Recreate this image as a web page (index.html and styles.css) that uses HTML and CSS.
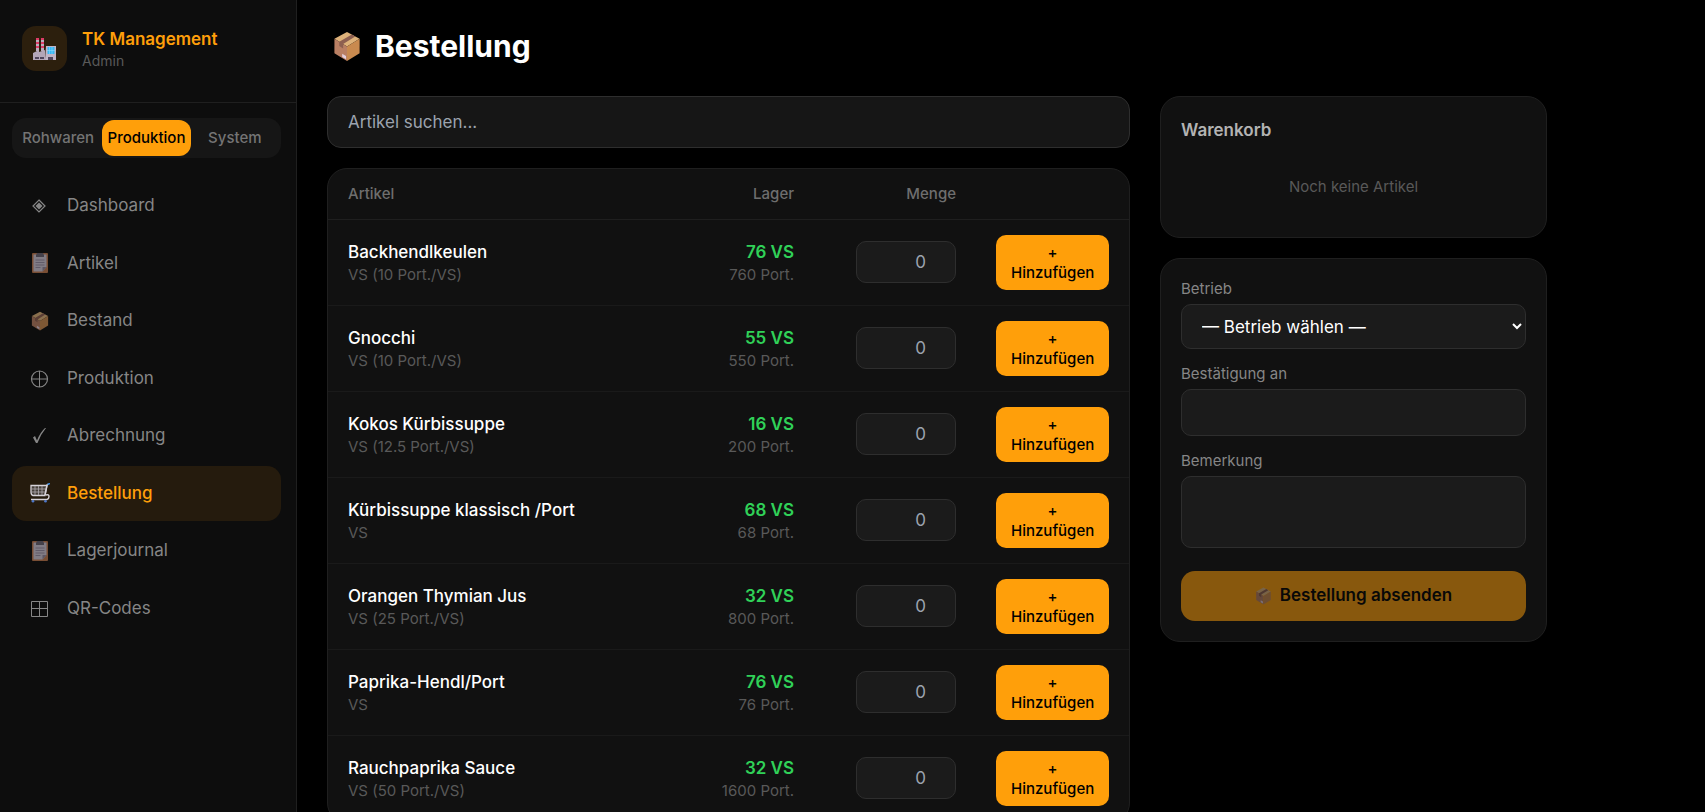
FILE: index.html
```html
<!DOCTYPE html>
<html lang="de">
  <head>
    <meta charset="UTF-8" />
    <meta name="viewport" content="width=device-width, initial-scale=1.0" />
    <title>TK Management – Bestellung</title>
    <link rel="stylesheet" href="styles.css" />
  </head>
  <body>
    <!-- Icons -->
    <svg class="sprite" aria-hidden="true">
      <symbol id="icon-box" viewBox="0 0 28 32">
        <path d="M14 1 27 8 14 16 1 8z" fill="#deb27a" />
        <path d="M1 8l13 8v15L1 23z" fill="#b97f63" />
        <path d="M27 8l-13 8v15l13-8z" fill="#c98a4f" />
        <path d="M19 3.700 22.500 5.600 10 13.500V18l-4-2.500v-4.400z" fill="#8d5f50" />
        <path d="M9 23.500l4 2.300v3.400l-4-2.300z" fill="#e3cfdc" />
      </symbol>
      <symbol id="icon-clipboard" viewBox="0 0 16 20">
        <rect width="16" height="20" rx="1" fill="#c27a4e" />
        <path d="M1.500 1.500h13v12.500l-4 4.500h-9z" fill="#cfc6d6" />
        <path d="M14.500 14l-4 4.500V14z" fill="#94899f" />
        <path d="M5 0h6l1 2v2H4V2z" fill="#6b6474" />
        <path d="M3.500 7h9M3.500 9.500h9M3.500 12h9M3.500 14.500h5" stroke="#8d8299" stroke-width=".8" />
      </symbol>
      <symbol id="icon-factory" viewBox="0 0 23 23">
        <path d="M3 1h3v13H3zM8 1h3v13H8z" fill="#b9aebd" />
        <path d="M3 1h3v2H3zM3 5h3v2H3zM3 9h3v2H3zM8 1h3v2H8zM8 5h3v2H8zM8 9h3v2H8z" fill="#dc3c68" />
        <path d="M0 16l6-3v2l6-2v10H0z" fill="#b3a6b8" />
        <path d="M13 9h10v14H12z" fill="#c0b4c6" />
        <path d="M14.500 10h7v7h-7z" fill="#38b8f5" />
        <path d="M16.500 10v7M19 10v7M14 13.500h8" stroke="#8fdcff" stroke-width=".6" />
        <path d="M2 20h4v2H2zM7 20h4v2H7zM15 20h5v3h-5z" fill="#50455c" />
      </symbol>
      <symbol id="icon-cart" viewBox="0 0 20 20">
        <path d="M1 2.500h16L15 12.500H3Q1 12 1 9z" fill="#46403a" stroke="#d6d2d8" stroke-width="1.300" />
        <path d="M5 3v9M8.500 3v9M12 3v9M1.500 6h14M1.500 9h14" stroke="#b0abb0" stroke-width=".8" />
        <path d="M18.500 1l-1.500 1-2 10M16 12q3-1 3 1.500T17 16.500H1" fill="none" stroke="#d6d2d8" stroke-width="1.400" />
        <path d="M17.500 1.500 20 .5" stroke="#3f8de0" stroke-width="1.600" />
        <circle cx="3" cy="18.300" r="1.300" fill="#4f78c8" />
        <circle cx="15.500" cy="18.300" r="1.300" fill="#4f78c8" />
      </symbol>
      <symbol id="icon-diamond" viewBox="0 0 20 20">
        <path d="M9 4l6 6-6 6-6-6z" fill="none" stroke="currentColor" stroke-width="1.200" />
        <path d="M9 6.500 12.500 10 9 13.500 5.500 10z" fill="currentColor" />
      </symbol>
      <symbol id="icon-plus-circle" viewBox="0 0 20 20">
        <path d="M9.500 3v16M1.500 11h16" stroke="currentColor" />
        <circle cx="9.500" cy="11" r="8" fill="none" stroke="currentColor" stroke-width="1.200" />
      </symbol>
      <symbol id="icon-check" viewBox="0 0 20 20">
        <path d="M3 11.500l2-1.500 2 4.500Q10 6.500 15 2h1Q10.500 8.500 7.500 17H6z" fill="currentColor" />
      </symbol>
      <symbol id="icon-grid" viewBox="0 0 20 20">
        <path d="M1.500 3.500h16v15h-16zM9.500 3.500v15M1.500 10.500h16" fill="none" stroke="currentColor" />
      </symbol>
    </svg>

    <div class="layout">
      <aside class="sidebar">
        <div class="brand">
          <div class="brand-logo"><svg><use href="#icon-factory" /></svg></div>
          <div>
            <div class="brand-name">TK Management</div>
            <div class="brand-role">Admin</div>
          </div>
        </div>

        <div class="tabs">
          <button class="tab">Rohwaren</button>
          <button class="tab active">Produktion</button>
          <button class="tab">System</button>
        </div>

        <nav class="nav">
          <a href="#" class="nav-item"><svg><use href="#icon-diamond" /></svg>Dashboard</a>
          <a href="#" class="nav-item"><svg class="emoji"><use href="#icon-clipboard" /></svg>Artikel</a>
          <a href="#" class="nav-item"><svg class="emoji"><use href="#icon-box" /></svg>Bestand</a>
          <a href="#" class="nav-item"><svg><use href="#icon-plus-circle" /></svg>Produktion</a>
          <a href="#" class="nav-item"><svg><use href="#icon-check" /></svg>Abrechnung</a>
          <a href="#" class="nav-item active"><svg><use href="#icon-cart" /></svg>Bestellung</a>
          <a href="#" class="nav-item"><svg class="emoji"><use href="#icon-clipboard" /></svg>Lagerjournal</a>
          <a href="#" class="nav-item"><svg><use href="#icon-grid" /></svg>QR-Codes</a>
        </nav>
      </aside>

      <main class="main">
        <h1><svg><use href="#icon-box" /></svg>Bestellung</h1>

        <div class="columns">
          <section class="products">
            <input type="search" class="search" placeholder="Artikel suchen..." aria-label="Artikel suchen" />

            <div class="table-card">
              <table>
                <colgroup>
                  <col />
                  <col class="col-stock" />
                  <col class="col-amount" />
                  <col class="col-action" />
                </colgroup>
                <thead>
                  <tr>
                    <th>Artikel</th>
                    <th class="right">Lager</th>
                    <th class="right">Menge</th>
                    <th></th>
                  </tr>
                </thead>
                <tbody>
                  <tr>
                    <td><div class="name">Backhendlkeulen</div><div class="sub">VS (10 Port./VS)</div></td>
                    <td class="right"><div class="stock">76 VS</div><div class="sub">760 Port.</div></td>
                    <td class="right"><input type="number" class="amount" min="0" placeholder="0" aria-label="Menge Backhendlkeulen" /></td>
                    <td><button class="add-btn">+ Hinzufügen</button></td>
                  </tr>
                  <tr>
                    <td><div class="name">Gnocchi</div><div class="sub">VS (10 Port./VS)</div></td>
                    <td class="right"><div class="stock">55 VS</div><div class="sub">550 Port.</div></td>
                    <td class="right"><input type="number" class="amount" min="0" placeholder="0" aria-label="Menge Gnocchi" /></td>
                    <td><button class="add-btn">+ Hinzufügen</button></td>
                  </tr>
                  <tr>
                    <td><div class="name">Kokos Kürbissuppe</div><div class="sub">VS (12.5 Port./VS)</div></td>
                    <td class="right"><div class="stock">16 VS</div><div class="sub">200 Port.</div></td>
                    <td class="right"><input type="number" class="amount" min="0" placeholder="0" aria-label="Menge Kokos Kürbissuppe" /></td>
                    <td><button class="add-btn">+ Hinzufügen</button></td>
                  </tr>
                  <tr>
                    <td><div class="name">Kürbissuppe klassisch /Port</div><div class="sub">VS</div></td>
                    <td class="right"><div class="stock">68 VS</div><div class="sub">68 Port.</div></td>
                    <td class="right"><input type="number" class="amount" min="0" placeholder="0" aria-label="Menge Kürbissuppe klassisch" /></td>
                    <td><button class="add-btn">+ Hinzufügen</button></td>
                  </tr>
                  <tr>
                    <td><div class="name">Orangen Thymian Jus</div><div class="sub">VS (25 Port./VS)</div></td>
                    <td class="right"><div class="stock">32 VS</div><div class="sub">800 Port.</div></td>
                    <td class="right"><input type="number" class="amount" min="0" placeholder="0" aria-label="Menge Orangen Thymian Jus" /></td>
                    <td><button class="add-btn">+ Hinzufügen</button></td>
                  </tr>
                  <tr>
                    <td><div class="name">Paprika-Hendl/Port</div><div class="sub">VS</div></td>
                    <td class="right"><div class="stock">76 VS</div><div class="sub">76 Port.</div></td>
                    <td class="right"><input type="number" class="amount" min="0" placeholder="0" aria-label="Menge Paprika-Hendl" /></td>
                    <td><button class="add-btn">+ Hinzufügen</button></td>
                  </tr>
                  <tr>
                    <td><div class="name">Rauchpaprika Sauce</div><div class="sub">VS (50 Port./VS)</div></td>
                    <td class="right"><div class="stock">32 VS</div><div class="sub">1600 Port.</div></td>
                    <td class="right"><input type="number" class="amount" min="0" placeholder="0" aria-label="Menge Rauchpaprika Sauce" /></td>
                    <td><button class="add-btn">+ Hinzufügen</button></td>
                  </tr>
                </tbody>
              </table>
            </div>
          </section>

          <aside class="order">
            <section class="card">
              <h2>Warenkorb</h2>
              <p class="empty">Noch keine Artikel</p>
            </section>

            <form class="card">
              <div class="field">
                <label for="betrieb">Betrieb</label>
                <select id="betrieb">
                  <option>— Betrieb wählen —</option>
                </select>
              </div>
              <div class="field">
                <label for="email">Bestätigung an</label>
                <input type="email" id="email" />
              </div>
              <div class="field">
                <label for="bemerkung">Bemerkung</label>
                <textarea id="bemerkung" rows="2"></textarea>
              </div>
              <button type="submit" class="submit-btn" disabled>
                <svg><use href="#icon-box" /></svg>Bestellung absenden
              </button>
            </form>
          </aside>
        </div>
      </main>
    </div>
  </body>
</html>
```

FILE: styles.css
```css
:root {
  --orange: #ff9f0a;
  --green: #30d158;
  --card: #111111;
  --field: #1b1b1b;
  --border: #1f1f1f;
  --border-field: #2e2e2e;
  --muted: #595959;
}

* {
  box-sizing: border-box;
}

body {
  margin: 0;
  background: #000;
  color: #fff;
  font-family: Inter, sans-serif;
  font-size: 17px;
  line-height: 1.5;
}

button,
input,
select,
textarea {
  font: inherit;
  color: inherit;
}

button {
  border: none;
  cursor: pointer;
}

.sprite {
  display: none;
}

.layout {
  display: flex;
  height: 100vh;
  overflow: hidden;
}

/* Sidebar */
.sidebar {
  flex: none;
  width: 297px;
  background: #0d0d0d;
  border-right: 1px solid var(--border);
}

.brand {
  display: flex;
  gap: 15px;
  padding: 26px 22px 31px;
  border-bottom: 1px solid var(--border);
}

.brand-logo {
  display: flex;
  align-items: center;
  justify-content: center;
  width: 45px;
  height: 45px;
  border-radius: 14px;
  background: #2c1f0d;
}

.brand-logo svg {
  width: 23px;
  height: 23px;
}

.brand-name {
  color: var(--orange);
  font-weight: 600;
  line-height: 27px;
}

.brand-role {
  color: var(--muted);
  font-size: 14px;
  line-height: 16px;
}

.tabs {
  display: flex;
  margin: 15px 15px 20px 12px;
  padding: 2px;
  border-radius: 14px;
  background: #161616;
}

.tab {
  flex: 1;
  padding: 0;
  border-radius: 12px;
  background: none;
  color: #747474;
  font-size: 15px;
  font-weight: 500;
  line-height: 36px;
}

.tab.active {
  background: var(--orange);
  color: #000;
}

.nav {
  display: flex;
  flex-direction: column;
  gap: 2px;
  padding: 0 15px 0 12px;
}

.nav-item {
  display: flex;
  align-items: center;
  gap: 17px;
  padding: 15px 18px;
  border-radius: 14px;
  color: #868686;
  text-decoration: none;
}

.nav-item svg {
  width: 20px;
  height: 20px;
}

.nav-item .emoji {
  opacity: 0.6;
}

.nav-item.active {
  background: #251b0d;
  color: var(--orange);
  font-weight: 500;
}

/* Content */
.main {
  flex: 1;
  max-width: 1280px;
  padding: 26px 30px;
}

h1 {
  display: flex;
  align-items: center;
  gap: 13px;
  margin: 0 0 30px;
  padding-left: 5px;
  font-size: 30px;
  font-weight: 700;
  line-height: 40px;
}

h1 svg {
  width: 30px;
  height: 31px;
}

.columns {
  display: grid;
  grid-template-columns: minmax(0, 1fr) 387px;
  gap: 30px;
}

.search {
  display: block;
  width: 100%;
  height: 52px;
  margin-bottom: 20px;
  padding: 0 20px;
  border: 1px solid var(--border-field);
  border-radius: 14px;
  background: #161616;
}

::placeholder {
  color: #9ca3af;
}

.table-card,
.card {
  border: 1px solid var(--border);
  border-radius: 20px;
  background: var(--card);
}

table {
  width: 100%;
  border-collapse: collapse;
  table-layout: fixed;
}

.col-stock {
  width: 160px;
}

.col-amount {
  width: 162px;
}

.col-action {
  width: 153px;
}

th {
  height: 50px;
  padding: 0 20px;
  border-bottom: 1px solid var(--border);
  color: #6e6e6e;
  font-size: 15px;
  font-weight: 500;
  text-align: left;
}

td {
  padding: 15px 20px;
  border-bottom: 1px solid #1a1a1a;
}

.right {
  text-align: right;
}

.name {
  font-weight: 500;
  line-height: 25px;
}

.stock {
  color: var(--green);
  font-weight: 600;
  line-height: 25px;
}

.sub {
  color: var(--muted);
  font-size: 15px;
  line-height: 19px;
}

.amount {
  display: block;
  width: 100px;
  height: 42px;
  margin-left: auto;
  padding: 0 14px;
  border: 1px solid var(--border-field);
  border-radius: 10px;
  background: var(--field);
  text-align: right;
}

.add-btn {
  display: block;
  width: 100%;
  padding: 8px 15px 7px;
  border-radius: 10px;
  background: var(--orange);
  color: #000;
  font-size: 15px;
  font-weight: 500;
  line-height: 20px;
}

/* Order */
.order {
  display: flex;
  flex-direction: column;
  gap: 20px;
}

.card {
  padding: 20px;
}

h2 {
  margin: 0;
  color: #b3b3b3;
  font-size: 17px;
  font-weight: 600;
  line-height: 26px;
}

.empty {
  margin: 0;
  padding: 33px 0 19px;
  color: var(--muted);
  font-size: 15px;
  line-height: 22px;
  text-align: center;
}

.field {
  margin-bottom: 15px;
}

.field label {
  display: block;
  margin-bottom: 5px;
  color: #868686;
  font-size: 15px;
  line-height: 20px;
}

.field select,
.field input,
.field textarea {
  display: block;
  width: 100%;
  border: 1px solid var(--border-field);
  border-radius: 10px;
  background: var(--field);
}

.field select {
  height: 45px;
  padding: 0 0 0 16px;
}

.field input {
  height: 47px;
  padding: 0 20px;
}

.field textarea {
  height: 72px;
  padding: 10px 20px;
  resize: none;
}

.submit-btn {
  display: flex;
  align-items: center;
  justify-content: center;
  gap: 8px;
  width: 100%;
  height: 50px;
  margin-top: 23px;
  border-radius: 14px;
  background: var(--orange);
  color: #000;
  font-weight: 600;
  opacity: 0.5;
}

.submit-btn svg {
  width: 17px;
  height: 18px;
}
```
